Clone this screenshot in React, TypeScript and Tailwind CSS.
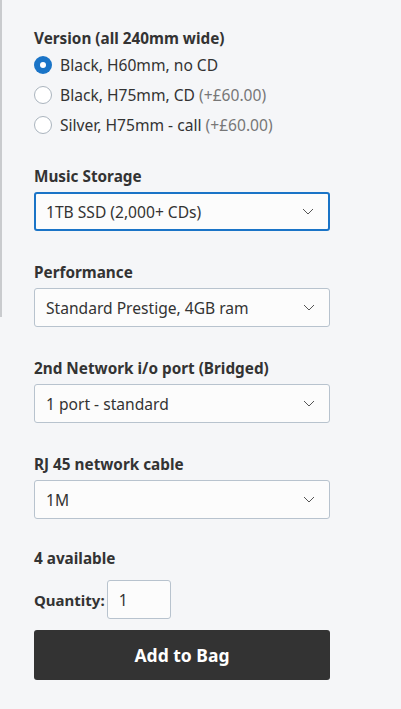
import React, { useState } from 'react';

const Chevron: React.FC = () => (
    <svg width="12" height="7" viewBox="0 0 12 7" fill="none" className="shrink-0">
        <path d="M1 1l5 5 5-5" stroke="#555" strokeWidth="1" />
    </svg>
);

interface SelectProps {
    label: string;
    value: string;
    focused?: boolean;
}

const SelectField: React.FC<SelectProps> = ({ label, value, focused }) => (
    <div className="mt-[31px]">
        <div className="text-[15.3px] leading-5 font-bold text-[#333]">{label}</div>
        <div
            className={`mt-[6px] h-[39px] flex items-center justify-between pl-[10px] pr-[14px] rounded-[3px] bg-[#fcfcfc] text-[15.6px] leading-5 text-[#333] ${
                focused ? 'border-2 border-[#1a74c7]' : 'border border-[#b8c3ce]'
            }`}
        >
            <span className={focused ? '' : 'pl-px'}>{value}</span>
            <Chevron />
        </div>
    </div>
);

const versions = [
    { name: 'Black, H60mm, no CD', extra: '' },
    { name: 'Black, H75mm, CD', extra: '(+£60.00)' },
    { name: 'Silver, H75mm - call', extra: '(+£60.00)' },
];

const App: React.FC = () => {
    const [selected, setSelected] = useState(0);

    return (
        <div className="min-h-[709px] bg-[#f5f6f8] flex" style={{ fontFamily: "'Noto Sans', sans-serif" }}>
            <div className="w-[2px] h-[317px] bg-[#c9cbce] shrink-0" />
            <div className="ml-[32px] w-[296px] pt-[28px]">
                <div className="text-[15.3px] leading-5 font-bold text-[#333]">Version (all 240mm wide)</div>
                <div className="mt-[2px]">
                    {versions.map((v, i) => (
                        <div
                            key={v.name}
                            className="h-[30px] flex items-center cursor-pointer"
                            onClick={() => setSelected(i)}
                        >
                            {selected === i ? (
                                <span className="w-[18px] h-[18px] rounded-full bg-[#1a74c7] flex items-center justify-center shrink-0">
                                    <span className="w-[6px] h-[6px] rounded-full bg-white" />
                                </span>
                            ) : (
                                <span className="w-[18px] h-[18px] rounded-full border border-[#aab4be] bg-white shrink-0" />
                            )}
                            <span className="ml-[8px] text-[15.6px] leading-5 text-[#333]">
                                {v.name}
                                {v.extra && <span className="text-[#777]"> {v.extra}</span>}
                            </span>
                        </div>
                    ))}
                </div>

                <div className="-mt-[5px]">
                    <SelectField label="Music Storage" value="1TB SSD (2,000+ CDs)" focused />
                </div>
                <SelectField label="Performance" value="Standard Prestige, 4GB ram" />
                <SelectField label="2nd Network i/o port (Bridged)" value="1 port - standard" />
                <SelectField label="RJ 45 network cable" value="1M" />

                <div className="mt-[29px] text-[15.3px] leading-5 font-bold text-[#333]">4 available</div>
                <div className="mt-[12px] flex items-center">
                    <span className="text-[15px] leading-5 font-bold text-[#333]">Quantity:</span>
                    <input
                        defaultValue="1"
                        className="ml-[2px] w-[64px] h-[39px] px-[11px] rounded-[3px] border border-[#b8c3ce] bg-[#fcfcfc] text-[15.6px] text-[#333] outline-none"
                    />
                </div>
                <button className="mt-[11px] w-full h-[50px] rounded-[3px] bg-[#333] text-white text-[17.5px] leading-6 font-bold">
                    Add to Bag
                </button>
            </div>
        </div>
    );
};

export default App;
